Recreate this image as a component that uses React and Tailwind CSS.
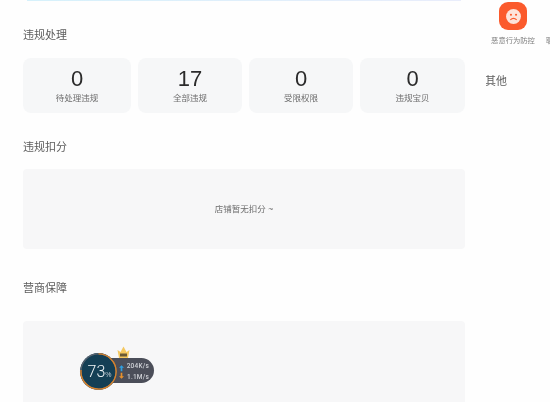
import React from 'react';

const stats = [
  { value: '0', label: '待处理违规', width: 'w-[108px]' },
  { value: '17', label: '全部违规', width: 'w-[104px]' },
  { value: '0', label: '受限权限', width: 'w-[104px]' },
  { value: '0', label: '违规宝贝', width: 'w-[105px]' },
];

const SpeedWidget = () => (
  <div className="absolute left-[80px] top-[346px] w-[74px] h-[44px]">
    {/* pill */}
    <div className="absolute left-[18px] top-[12px] w-[56px] h-[25px] rounded-r-full bg-[#4b4e59] flex flex-col justify-center items-end pt-[3px] pr-[5px] text-[6.5px] leading-[11px] font-['Roboto',sans-serif] font-medium tracking-[0.2px] text-[#cfd1d6]">
      <span>204K/s</span>
      <span>1.1M/s</span>
    </div>
    {/* arrows */}
    <svg className="absolute left-[39px] top-[17px]" width="5" height="18" viewBox="0 0 6 18">
      <path d="M3 1 L6 4 H4 V8 H2 V4 H0 Z" fill="#2f9fe0" />
      <path d="M3 17 L6 14 H4 V10 H2 V14 H0 Z" fill="#e8912c" />
    </svg>
    {/* gauge */}
    <div className="absolute left-0 top-[7px] w-[37px] h-[37px] rounded-full bg-[#143f55] flex items-center justify-center pl-[2px] text-[#f2f6f8]">
      <svg className="absolute inset-0" width="37" height="37" viewBox="0 0 37 37">
        <circle cx="18.5" cy="18.5" r="17.6" fill="none" stroke="#5c6470" strokeWidth="1.2" />
        <path d="M18.5 0.9 A17.6 17.6 0 1 1 1 17" fill="none" stroke="#d9822b" strokeWidth="1.4" />
      </svg>
      <span className="text-[16px] leading-none font-['Roboto',sans-serif] font-light">73</span>
      <span className="text-[7px] leading-none mt-[5px] text-[#c8d0d6]">%</span>
    </div>
    {/* crown */}
    <svg className="absolute left-[37px] top-0" width="13" height="13" viewBox="0 0 13 13">
      <path d="M0.5 4 L3.5 6 L6.5 0.5 L9.5 6 L12.5 4 L11 12 H2 Z" fill="#f4c860" />
      <rect x="3" y="7.5" width="7" height="3" fill="#6b5a34" />
    </svg>
  </div>
);

const App = () => {
  return (
    <div className="relative w-[550px] h-[402px] overflow-hidden flex bg-[#fefefe] blur-[0.3px] font-['Liberation_Sans','Noto_Sans_CJK_SC',sans-serif]">
      {/* Left column */}
      <div className="w-[442px] ml-[23px] flex-shrink-0">
        <div className="h-[1px] mx-[4px] bg-gradient-to-r from-[#d6f1fb] to-[#e9edfb]" />
        <h2 className="mt-[26px] text-[11px] leading-[16px] font-normal text-[#5c5c5c]">违规处理</h2>

        <div className="mt-[15px] flex gap-[7px]">
          {stats.map((s) => (
            <div key={s.label} className={`${s.width} h-[55px] rounded-[8px] bg-[#f6f7f8] flex flex-col items-center pt-[8px]`}>
              <span className="text-[22px] leading-[25px] text-[#2b2b2b]">{s.value}</span>
              <span className="text-[8.5px] leading-[14px] text-[#6e6e6e]">{s.label}</span>
            </div>
          ))}
        </div>

        <h2 className="mt-[26px] text-[11px] leading-[16px] font-normal text-[#5c5c5c]">违规扣分</h2>
        <div className="mt-[14px] h-[80px] rounded-[4px] bg-[#f7f7f8] flex items-center justify-center text-[8.5px] text-[#6e6e6e]">
          店铺暂无扣分 ~
        </div>

        <h2 className="mt-[31px] text-[11px] leading-[16px] font-normal text-[#5c5c5c]">营商保障</h2>
        <div className="mt-[25px] h-[90px] rounded-[4px] bg-[#f7f7f8]" />
      </div>

      {/* Right column */}
      <div className="ml-[21px] flex-1 min-w-0 overflow-hidden">
        <div className="flex gap-[11px] pl-[5px] pt-[2px] whitespace-nowrap">
          <div className="w-[44px] flex-shrink-0 flex flex-col items-center">
            <div className="w-[28px] h-[28px] rounded-[9px] bg-[#fb5a2c] flex items-center justify-center">
              <svg width="17" height="17" viewBox="0 0 16 16">
                <circle cx="8" cy="8" r="7" fill="#fde3da" />
                <circle cx="5.6" cy="6.4" r="1" fill="#fb5a2c" />
                <circle cx="10.4" cy="6.4" r="1" fill="#fb5a2c" />
                <path d="M5 11.2 Q8 8.4 11 11.2" fill="none" stroke="#fb5a2c" strokeWidth="1.2" />
              </svg>
            </div>
            <span className="mt-[6px] text-[7.3px] leading-[10px] text-[#7d7d7d]">恶意行为防控</span>
          </div>
          <div className="flex-shrink-0 pt-[34px] text-[7.3px] leading-[10px] text-[#7d7d7d]">聊天</div>
        </div>
        <h2 className="mt-[27px] -ml-[1px] text-[11px] leading-[16px] font-normal text-[#5c5c5c]">其他</h2>
      </div>

      <SpeedWidget />
    </div>
  );
};

export default App;
